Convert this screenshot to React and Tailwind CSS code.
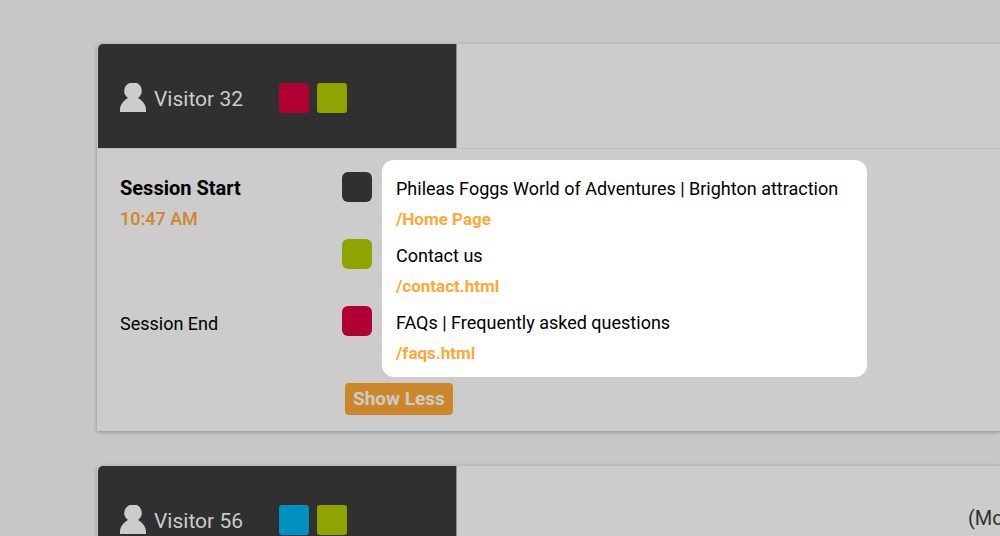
function PersonIcon() {
  return (
    <svg viewBox="0 0 26 30" className="h-[30px] w-[26px] shrink-0 fill-[#cccccc]" aria-hidden="true">
      <path d="M9.5 0H17Q21.8 2.5 21.8 8Q21.8 12.2 18 15C22.5 17.6 26 21.8 26 26.5V29H0V26.5C0 21.8 3.5 17.6 8 15Q4.2 12.2 4.2 8Q4.2 2.5 9.5 0Z" />
    </svg>
  );
}

function VisitorHeader({ name, swatches, note }) {
  return (
    <header className="flex h-[105px] border-b border-[#bfbfbf] pl-px">
      <div className="flex w-[359px] shrink-0 items-center rounded-tl-[5px] border-r border-[#8a8a8a] bg-[#303030] pl-[22px] pt-1">
        <PersonIcon />
        <h2 className="w-[133px] pl-2 pt-0.5 text-[21px] leading-7 text-[#cccccc]">{name}</h2>
        <div className="flex gap-2">
          {swatches.map((color) => (
            <span key={color} className={`size-[30px] rounded-[3px] ${color}`} />
          ))}
        </div>
      </div>
      {note && (
        <p className="ml-auto flex w-8 items-center overflow-hidden whitespace-nowrap text-[20px] text-[#303030]">
          {note}
        </p>
      )}
    </header>
  );
}

const pages = [
  { title: "Phileas Foggs World of Adventures | Brighton attraction", path: "/Home Page", color: "bg-[#303030]" },
  { title: "Contact us", path: "/contact.html", color: "bg-[#90a400]" },
  { title: "FAQs | Frequently asked questions", path: "/faqs.html", color: "bg-[#b00034]" },
];

const card = "rounded-tl-[5px] bg-[#cccccc] shadow-[0_1px_4px_rgba(0,0,0,0.3)]";

export default function App() {
  return (
    <main className="h-screen overflow-hidden bg-[#c6c7c9] pl-[97px] pt-11 font-['Roboto',sans-serif] text-black">
      <section className={`${card} mb-[35px]`}>
        <VisitorHeader name="Visitor 32" swatches={["bg-[#b00034]", "bg-[#90a400]"]} />
        <div className="flex pl-[23px] pt-[11px]">
          <div className="w-[222px] shrink-0 pt-3">
            <div className="h-[135px]">
              <h3 className="text-[20px] leading-8 font-bold">Session Start</h3>
              <p className="text-[18px] leading-[30px] font-medium text-[#cc872b]">10:47 AM</p>
            </div>
            <p className="text-[18px] leading-[34px]">Session End</p>
          </div>
          <div className="flex w-10 shrink-0 flex-col gap-[37px] pt-3">
            {pages.map((page) => (
              <span key={page.path} className={`size-[30px] rounded-[6px] ${page.color}`} />
            ))}
          </div>
          <ul className="w-[485px] rounded-xl bg-white px-[14px] pb-1 pt-3">
            {pages.map((page) => (
              <li key={page.path} className="h-[67px]">
                <p className="whitespace-nowrap text-[18px] leading-[34px]">{page.title}</p>
                <a href="#page" className="block text-[17px] leading-[26px] font-bold text-[#ffa836]">{page.path}</a>
              </li>
            ))}
          </ul>
        </div>
        <div className="pb-4 pl-[248px] pt-[6px]">
          <button type="button" className="block h-8 rounded-[4px] bg-[#cc872b] px-2 text-[19px] font-bold text-[#cccccc]">
            Show Less
          </button>
        </div>
      </section>
      <section className={card}>
        <VisitorHeader name="Visitor 56" swatches={["bg-[#0091c0]", "bg-[#90a400]"]} note="(Mo" />
      </section>
    </main>
  );
}
